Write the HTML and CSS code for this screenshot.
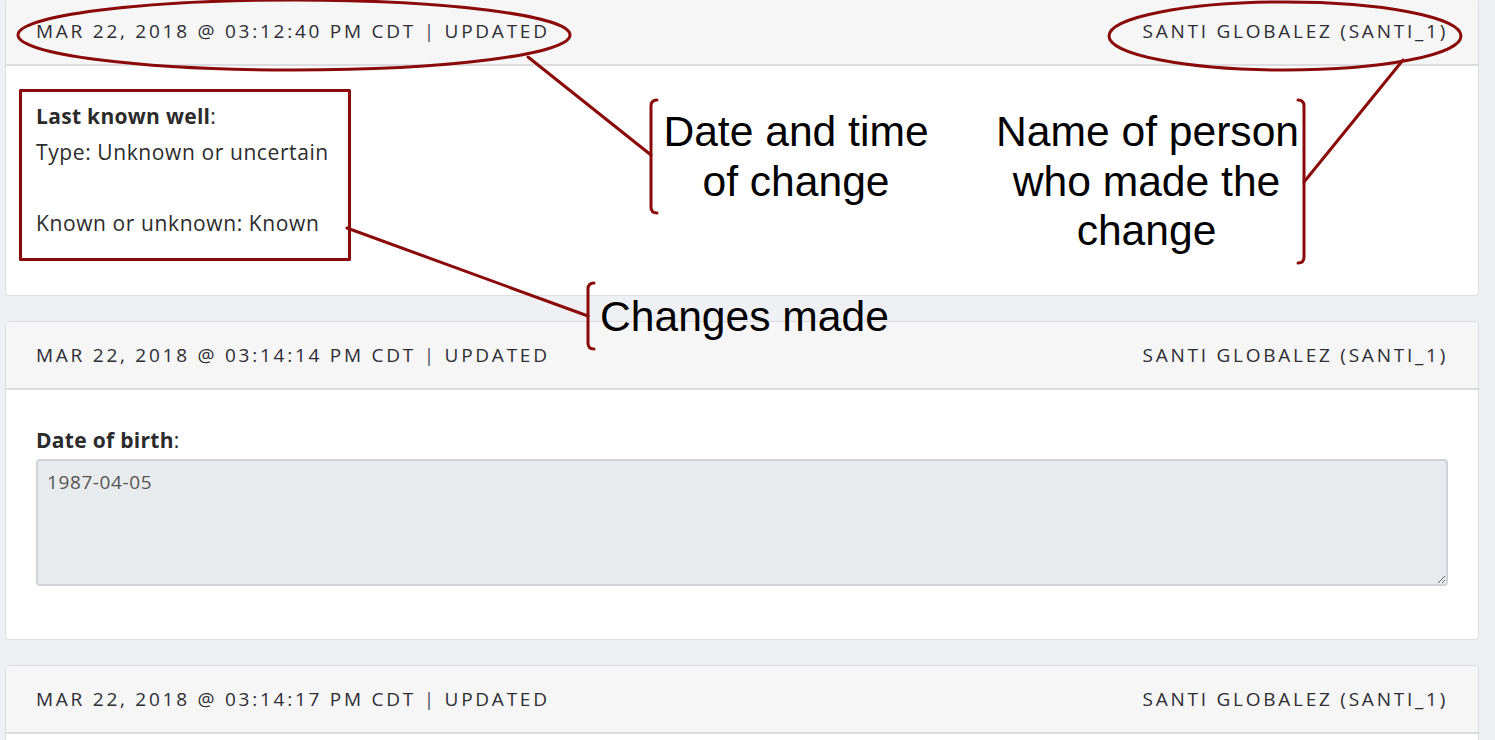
FILE: index.html
```html
<!DOCTYPE html>
<html lang="en">
<head>
<meta charset="utf-8">
<title>Change history</title>
<link rel="stylesheet" href="styles.css">
</head>
<body>
<div class="page">
  <div class="feed">
    <section class="card">
      <header class="card-head">
        <span class="when">MAR 22, 2018 @ 03:12:40 PM CDT <span class="sep">|</span> UPDATED</span>
        <span class="who">SANTI GLOBALEZ (SANTI_1)</span>
      </header>
      <div class="card-body">
        <div class="field-label"><strong>Last known well</strong>:</div>
        <div class="field-value">Type: Unknown or uncertain<br><br>Known or unknown: Known</div>
      </div>
    </section>

    <section class="card">
      <header class="card-head">
        <span class="when">MAR 22, 2018 @ 03:14:14 PM CDT <span class="sep">|</span> UPDATED</span>
        <span class="who">SANTI GLOBALEZ (SANTI_1)</span>
      </header>
      <div class="card-body">
        <div class="field-label"><strong>Date of birth</strong>:</div>
        <textarea class="field-box" readonly>1987-04-05</textarea>
      </div>
    </section>

    <section class="card">
      <header class="card-head">
        <span class="when">MAR 22, 2018 @ 03:14:17 PM CDT <span class="sep">|</span> UPDATED</span>
        <span class="who">SANTI GLOBALEZ (SANTI_1)</span>
      </header>
      <div class="card-body"></div>
    </section>
  </div>

  <svg class="annot" width="1495" height="740" viewBox="0 0 1495 740" aria-hidden="true">
    <g fill="none" stroke="#8a0a0a" stroke-width="3" stroke-linecap="round" stroke-linejoin="round">
      <ellipse cx="294" cy="35" rx="276" ry="35"/>
      <ellipse cx="1285" cy="36" rx="176" ry="34"/>
      <rect x="20.5" y="90.5" width="329" height="169"/>
      <line x1="528" y1="57" x2="651" y2="155"/>
      <path d="M657 100 Q651 100 651 106 L651 207 Q651 213 657 213"/>
      <line x1="1403" y1="60" x2="1304" y2="182"/>
      <path d="M1298 100 Q1304 100 1304 106 L1304 257 Q1304 263 1298 263"/>
      <line x1="347" y1="228" x2="588" y2="316"/>
      <path d="M594 283 Q588 283 588 289 L588 343 Q588 349 594 349"/>
    </g>
  </svg>
  <div class="note note-date">Date and time<br>of change</div>
  <div class="note note-name">Name of person<br>who made the<br>change</div>
  <div class="note note-changes">Changes made</div>
</div>
</body>
</html>
```

FILE: styles.css
```css
* { box-sizing: border-box; }

html, body {
  margin: 0;
  padding: 0;
}

body {
  background: #eff0f3;
  font-family: "Open Sans", Lato, sans-serif;
  color: #2b2b2b;
}

.page {
  position: relative;
  width: 1495px;
  height: 740px;
  overflow: hidden;
}

.feed {
  display: flex;
  flex-direction: column;
  gap: 25px;
  padding: 0 16px 0 5px;
  margin-top: -3px;
}

.card {
  background: #fff;
  border: 1px solid #dcdde0;
  border-radius: 4px;
}

.card-head {
  display: flex;
  justify-content: space-between;
  align-items: center;
  height: 68px;
  padding: 0 30px;
  background: #f6f6f7;
  border-bottom: 2px solid #dcdde0;
  border-radius: 4px 4px 0 0;
  font-size: 19px;
  letter-spacing: 2.75px;
  color: #2d2d33;
}

.sep {
  color: #4a4d58;
}

.card-body {
  padding: 32px 30px 53px;
  font-size: 21px;
  line-height: 35.5px;
  letter-spacing: 0.6px;
  color: #2b2b2b;
}

.field-label {
  line-height: 37px;
}

.field-label strong {
  font-weight: 700;
  letter-spacing: 0.3px;
}

.field-box {
  display: block;
  width: 100%;
  height: 127px;
  margin: 0;
  padding: 8px 9px;
  background: #e8ebee;
  border: 2px solid #cfd2d7;
  border-radius: 4px;
  font-family: "Open Sans", Lato, sans-serif;
  font-size: 19px;
  letter-spacing: 0.6px;
  line-height: 26px;
  color: #555;
  resize: vertical;
  outline: none;
}

.annot {
  position: absolute;
  left: 0;
  top: 0;
  pointer-events: none;
}

.note {
  position: absolute;
  font-family: "Liberation Sans", Arial, sans-serif;
  font-size: 42.6px;
  line-height: 50px;
  letter-spacing: 0;
  color: #000;
  text-align: center;
  white-space: nowrap;
}

.note-date {
  left: 646px;
  top: 106px;
  width: 300px;
}

.note-name {
  left: 996px;
  top: 107px;
  width: 301px;
  line-height: 49.5px;
}

.note-changes {
  left: 600px;
  top: 291px;
  text-align: left;
}
```
